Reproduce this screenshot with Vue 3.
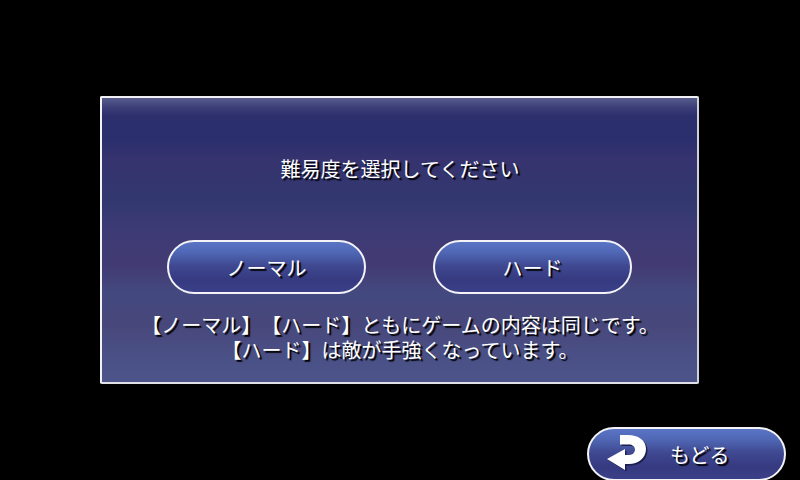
<script setup>
const levels = ['ノーマル', 'ハード']
</script>

<template>
  <div class="screen">
    <div class="panel">
      <p class="title">難易度を選択してください</p>
      <div class="choices">
        <button v-for="level in levels" :key="level" class="pill">{{ level }}</button>
      </div>
      <p class="note">【ノーマル】【ハード】ともにゲームの内容は同じです。<br />【ハード】は敵が手強くなっています。</p>
    </div>
    <div class="footer">
      <button class="pill back">
        <svg class="back-icon" width="41" height="38" viewBox="0 0 41 38">
          <path class="icon-shade" d="M14.5 1.5h8c10 0 18 5 18 14 0 9-8 15-17 15h-4v6L1.5 25.5l18-10v6h4c4 0 6-3 6-5.5 0-3-3-5-6-5h-9z" />
          <path class="icon-main" d="M13 0h8c10 0 18 5 18 14 0 9-8 15-17 15h-4v6L0 24l18-10v6h4c4 0 6-3 6-5.5 0-3-3-5-6-5h-9z" />
        </svg>
        <span>もどる</span>
      </button>
    </div>
  </div>
</template>

<style>
html, body {
  margin: 0;
  background: #000;
}
</style>

<style scoped>
.screen {
  width: 800px;
  height: 480px;
  overflow: hidden;
  box-sizing: border-box;
  padding: 96px 14px 0 100px;
  background: #000;
  font-family: "Liberation Sans", "Noto Sans CJK JP", sans-serif;
  color: #fff;
  text-shadow: 2px 2px 1px #000;
  text-spacing-trim: space-all;
}
.panel {
  width: 599px;
  height: 288px;
  box-sizing: border-box;
  border: 2px solid #f2f2f6;
  border-right-color: #d0d0d8;
  border-bottom-color: #e0e0e6;
  border-radius: 2px;
  padding-top: 59px;
  display: flex;
  flex-direction: column;
  align-items: center;
  background: linear-gradient(180deg, #595d8c 0, #3c3f78 9px, #2c2f6c 18px, #2b2f6d 42px, #36336f 62px, #32386f 104px, #3c3a75 128px, #433b73 168px, #43497f 194px, #48477b 226px, #4a5187 262px, #4c5489 284px);
}
.title {
  margin: 1px 0 0 1px;
  font-size: 20px;
  line-height: 24px;
}
.choices {
  display: flex;
  gap: 67px;
  margin-top: 58px;
}
.pill {
  width: 199px;
  height: 54px;
  box-sizing: border-box;
  border: 2px solid #f4f4f8;
  border-radius: 27px;
  padding: 0;
  background: linear-gradient(180deg, #5a74c4 0, #5068b6 10px, #3f4890 24px, #363a80 38px, #3a4088 50px);
  color: inherit;
  font-family: inherit;
  font-size: 20px;
  text-shadow: inherit;
}
.note {
  margin: 20px 0 0 1px;
  font-size: 20px;
  line-height: 25px;
  text-align: center;
}
.footer {
  display: flex;
  justify-content: flex-end;
  margin-top: 43px;
}
.back {
  display: flex;
  align-items: center;
  flex: none;
}
.back-icon {
  margin-left: 18px;
  flex: none;
}
.back span {
  margin-left: 22px;
  font-size: 20px;
}
.icon-shade {
  fill: #1c1f50;
}
.icon-main {
  fill: #fff;
}
</style>
